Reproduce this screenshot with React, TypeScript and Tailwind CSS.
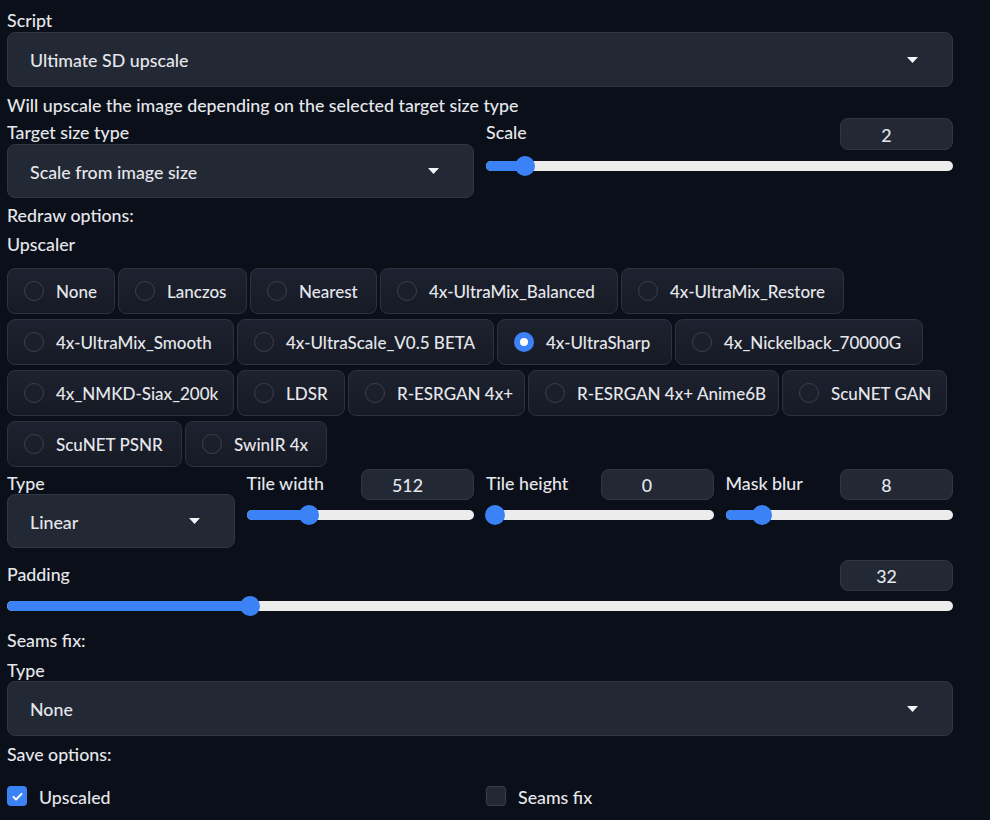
import React from "react";

// widths follow the wrapped rows of the original gradio radio group
const UPSCALERS = [
  { name: "None", w: "w-[108px]" },
  { name: "Lanczos", w: "w-[129px]" },
  { name: "Nearest", w: "w-[127px]" },
  { name: "4x-UltraMix_Balanced", w: "w-[238px]" },
  { name: "4x-UltraMix_Restore", w: "w-[223px]" },
  { name: "4x-UltraMix_Smooth", w: "w-[227px]" },
  { name: "4x-UltraScale_V0.5 BETA", w: "w-[257px]" },
  { name: "4x-UltraSharp", w: "w-[175px]" },
  { name: "4x_Nickelback_70000G", w: "w-[248px]" },
  { name: "4x_NMKD-Siax_200k", w: "w-[227px]" },
  { name: "LDSR", w: "w-[108px]" },
  { name: "R-ESRGAN 4x+", w: "w-[177px]" },
  { name: "R-ESRGAN 4x+ Anime6B", w: "w-[251px]" },
  { name: "ScuNET GAN", w: "w-[165px]" },
  { name: "ScuNET PSNR", w: "w-[175px]" },
  { name: "SwinIR 4x", w: "w-[142px]" },
];

function Label({ children, className = "" }: { children: React.ReactNode; className?: string }) {
  return <div className={`translate-y-px leading-6 text-gray-200 ${className}`}>{children}</div>;
}

function Caret() {
  return (
    <svg width="11" height="6" viewBox="0 0 11 6" className="shrink-0">
      <polygon points="0,0 11,0 5.5,6" fill="#f3f4f6" />
    </svg>
  );
}

function Dropdown({ value, h = "h-[55px]" }: { value: string; h?: string }) {
  return (
    <div
      className={`${h} flex items-center justify-between rounded-lg border border-[#303643] bg-[#232835] pl-[22px] pr-[34px] text-gray-200`}
    >
      <span className="translate-y-px">{value}</span>
      <Caret />
    </div>
  );
}

function NumberBox({ value, h = "h-[32px]" }: { value: string; h?: string }) {
  return (
    <div
      className={`${h} flex w-[113px] items-center justify-center rounded-lg border border-[#303643] bg-[#232835] pr-5 text-gray-200`}
    >
      <span className="translate-y-px">{value}</span>
    </div>
  );
}

function Slider({ pct }: { pct: number }) {
  return (
    <div className="relative h-[10px] rounded-full bg-[#ececec]">
      <div className="absolute inset-y-0 left-0 rounded-full bg-[#3b82f6]" style={{ width: `${pct}%` }} />
      <div
        className="absolute top-1/2 h-5 w-5 -translate-x-1/2 -translate-y-1/2 rounded-full bg-[#3b82f6]"
        style={{ left: `${pct}%` }}
      />
    </div>
  );
}

function SliderField({
  label,
  value,
  pct,
  headH = "h-[31px]",
  trackMt = "mt-[10px]",
}: {
  label: string;
  value: string;
  pct: number;
  headH?: string;
  trackMt?: string;
}) {
  return (
    <div>
      <div className={`${headH} flex items-start justify-between`}>
        <Label className="pt-px">{label}</Label>
        <NumberBox value={value} h={headH} />
      </div>
      <div className={trackMt}>
        <Slider pct={pct} />
      </div>
    </div>
  );
}

function Radio({ label, w, checked }: { label: string; w: string; checked?: boolean }) {
  return (
    <div
      className={`${w} flex h-[46px] items-center gap-3 whitespace-nowrap rounded-lg border border-[#2c323e] bg-linear-to-b from-[#1d2230] to-[#161a24] pl-4 text-[17px] text-gray-200`}
    >
      {checked ? (
        <span className="flex h-5 w-5 shrink-0 items-center justify-center rounded-full bg-[#3b82f6]">
          <span className="h-2 w-2 rounded-full bg-white" />
        </span>
      ) : (
        <span className="h-5 w-5 shrink-0 rounded-full border border-[#3a404c] bg-[#1a1f2b]" />
      )}
      <span className="translate-y-px">{label}</span>
    </div>
  );
}

function Check({ label, checked }: { label: string; checked?: boolean }) {
  return (
    <div className="flex h-5 items-center gap-3 text-gray-200">
      {checked ? (
        <span className="flex h-5 w-5 items-center justify-center rounded-[4px] bg-[#3b82f6]">
          <svg width="13" height="13" viewBox="0 0 16 16">
            <path d="M3 8.5l3.2 3.2L13 4.8" fill="none" stroke="white" strokeWidth="2.4" strokeLinecap="round" strokeLinejoin="round" />
          </svg>
        </span>
      ) : (
        <span className="h-5 w-5 rounded-[4px] border border-[#3a404c] bg-[#232835]" />
      )}
      <span className="translate-y-px">{label}</span>
    </div>
  );
}

export default function App() {
  return (
    <div className="min-h-screen bg-[#0b0f19] font-['Lato',sans-serif] text-[17.8px] font-medium">
      <div className="ml-[7px] w-[946px] pt-[7px]">
        <Label>Script</Label>
        <div className="mt-px">
          <Dropdown value="Ultimate SD upscale" />
        </div>
        <Label className="mt-[5px]">Will upscale the image depending on the selected target size type</Label>

        <div className="mt-[2px] grid grid-cols-2 gap-x-3">
          <div>
            <Label className="pt-px">Target size type</Label>
            <div className="mt-[1px]">
              <Dropdown value="Scale from image size" h="h-[54px]" />
            </div>
          </div>
          <SliderField label="Scale" value="2" pct={8.4} headH="h-[32px]" trackMt="mt-[11px]" />
        </div>

        <Label className="mt-[4px]">Redraw options:</Label>
        <Label className="mt-[5px]">Upscaler</Label>

        <div className="mt-[13px] flex flex-wrap gap-x-[3px] gap-y-[5px]">
          {UPSCALERS.map((u) => (
            <Radio key={u.name} label={u.name} w={u.w} checked={u.name === "4x-UltraSharp"} />
          ))}
        </div>

        <div className="mt-[2px] grid grid-cols-4 gap-x-3">
          <div>
            <Label className="pt-px">Type</Label>
            <Dropdown value="Linear" h="h-[54px]" />
          </div>
          <SliderField label="Tile width" value="512" pct={27.6} />
          <SliderField label="Tile height" value="0" pct={4} />
          <SliderField label="Mask blur" value="8" pct={16.2} />
        </div>

        <div className="mt-[12px]">
          <SliderField label="Padding" value="32" pct={25.7} />
        </div>

        <Label className="mt-[16px]">Seams fix:</Label>
        <Label className="mt-[6px]">Type</Label>
        <Dropdown value="None" />
        <Label className="mt-[5px]">Save options:</Label>

        <div className="mt-[21px] grid grid-cols-2 gap-x-3">
          <Check label="Upscaled" checked />
          <Check label="Seams fix" />
        </div>
      </div>
    </div>
  );
}
